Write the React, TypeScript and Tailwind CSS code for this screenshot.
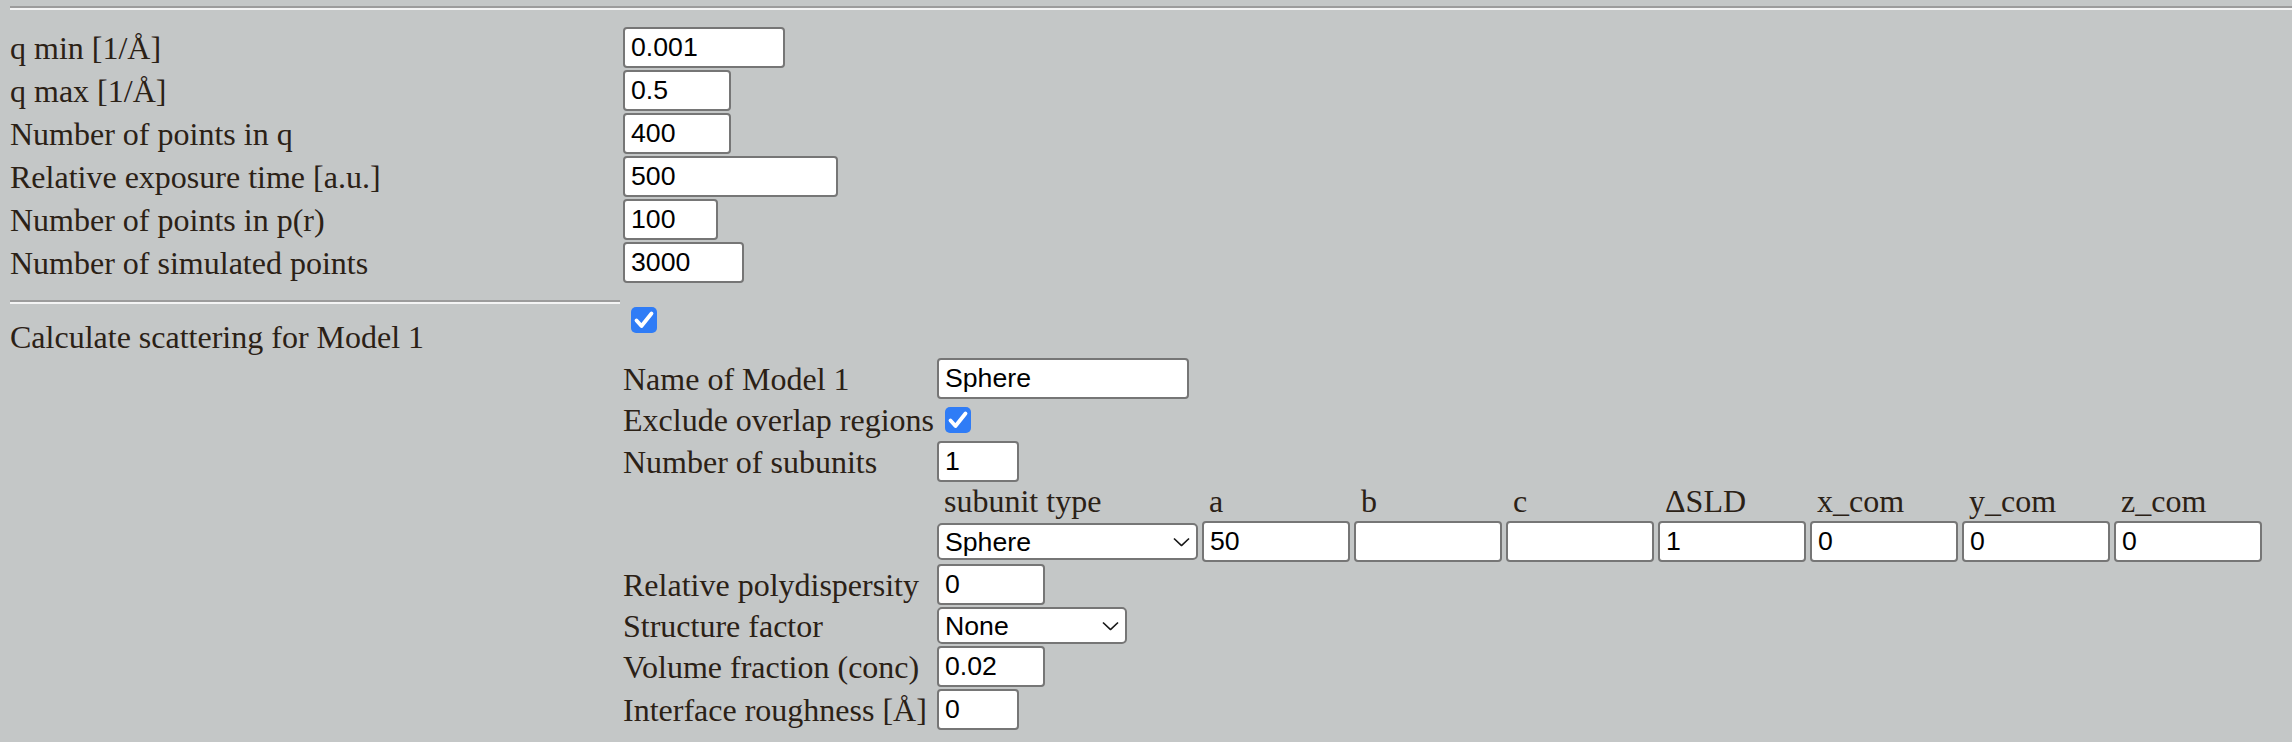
import type { ReactNode } from 'react'

const serif = "font-['Liberation_Serif','Times_New_Roman',serif] text-[32px] text-[#2b2116]"
const sans = "font-['Liberation_Sans',Arial,sans-serif] text-[26.67px] text-black"

function TextBox({ value, width }: { value: string; width: string }) {
  return (
    <input
      type="text"
      defaultValue={value}
      className={`h-[41px] ${width} rounded-[4px] border-2 border-[#767676] bg-white px-[6px] ${sans} outline-none`}
    />
  )
}

function Dropdown({ value, width }: { value: string; width: string }) {
  return (
    <div className={`relative h-[37px] ${width}`}>
      <select
        defaultValue={value}
        className={`h-full w-full appearance-none rounded-[5px] border-2 border-[#767676] bg-white py-0 pl-[6px] leading-[30px] ${sans} outline-none`}
      >
        <option>{value}</option>
      </select>
      <svg
        className="pointer-events-none absolute right-[8px] top-1/2 h-[9px] w-[17px] -translate-y-1/2"
        viewBox="0 0 17 9"
      >
        <title>open</title>
        <path d="M1 1 L8.5 8 L16 1" fill="none" stroke="#1a1a1a" strokeWidth={1.7} />
      </svg>
    </div>
  )
}

function CheckBox({ className = '' }: { className?: string }) {
  return (
    <span
      className={`flex h-[26px] w-[26px] items-center justify-center rounded-[5px] bg-[#2f7cf6] ${className}`}
    >
      <svg viewBox="0 0 26 26" className="h-[26px] w-[26px]">
        <title>checked</title>
        <path
          d="M5.5 13.5 L10.5 19 L20.5 6.5"
          fill="none"
          stroke="white"
          strokeWidth={3.8}
          strokeLinecap="round"
          strokeLinejoin="round"
        />
      </svg>
    </span>
  )
}

function Rule({ className = '' }: { className?: string }) {
  return <div className={`border-t-2 border-b-2 border-t-[#9c9c9c] border-b-[#f4f4f4] ${className}`} />
}

function TopRow({ label, value, width }: { label: string; value: string; width: string }) {
  return (
    <div className="flex h-[41px] items-center gap-[3px]">
      <div className={`w-[610px] ${serif}`}>{label}</div>
      <TextBox value={value} width={width} />
    </div>
  )
}

function ModelRow({ label, height = 'h-[41px]', children }: { label: string; height?: string; children: ReactNode }) {
  return (
    <div className={`flex ${height} items-center gap-[4px]`}>
      <div className={`w-[310px] whitespace-nowrap ${serif}`}>{label}</div>
      {children}
    </div>
  )
}

const columns = ['a', 'b', 'c', 'ΔSLD', 'x_com', 'y_com', 'z_com']
const values = ['50', '', '', '1', '0', '0', '0']

export default function App() {
  return (
    <div className="min-h-screen w-full bg-[#c4c7c7] pl-[10px] pt-[6px]">
      <Rule />
      <div className="mt-[17px] flex flex-col gap-[2px]">
        <TopRow label="q min [1/Å]" value="0.001" width="w-[162px]" />
        <TopRow label="q max [1/Å]" value="0.5" width="w-[108px]" />
        <TopRow label="Number of points in q" value="400" width="w-[108px]" />
        <TopRow label="Relative exposure time [a.u.]" value="500" width="w-[215px]" />
        <TopRow label="Number of points in p(r)" value="100" width="w-[95px]" />
        <TopRow label="Number of simulated points" value="3000" width="w-[121px]" />
      </div>

      <div className="mt-[2px] flex gap-[3px]">
        <div className="w-[610px]">
          <Rule className="mt-[15px]" />
          <div className={`mt-[9px] ${serif}`}>Calculate scattering for Model 1</div>
        </div>

        <div className="flex flex-col">
          <CheckBox className="ml-[8px] mt-[22px]" />
          <div className="mt-[25px] flex flex-col gap-[2px]">
            <ModelRow label="Name of Model 1">
              <TextBox value="Sphere" width="w-[252px]" />
            </ModelRow>
            <ModelRow label="Exclude overlap regions" height="h-[38px]">
              <CheckBox className="ml-[8px] self-start mt-[6px]" />
            </ModelRow>
            <ModelRow label="Number of subunits">
              <TextBox value="1" width="w-[82px]" />
            </ModelRow>
            <div className="ml-[314px] flex h-[35px] items-center gap-[4px]">
              <div className={`w-[261px] pl-[7px] leading-[35px] ${serif}`}>subunit type</div>
              {columns.map((c) => (
                <div key={c} className={`w-[148px] pl-[7px] leading-[35px] ${serif}`}>
                  {c}
                </div>
              ))}
            </div>
            <div className="ml-[314px] flex h-[41px] items-center gap-[4px]">
              <Dropdown value="Sphere" width="w-[261px]" />
              {values.map((v, i) => (
                <TextBox key={columns[i]} value={v} width="w-[148px]" />
              ))}
            </div>
            <ModelRow label="Relative polydispersity">
              <TextBox value="0" width="w-[108px]" />
            </ModelRow>
            <ModelRow label="Structure factor" height="h-[37px]">
              <Dropdown value="None" width="w-[190px]" />
            </ModelRow>
            <ModelRow label="Volume fraction (conc)">
              <TextBox value="0.02" width="w-[108px]" />
            </ModelRow>
            <ModelRow label="Interface roughness [Å]">
              <TextBox value="0" width="w-[82px]" />
            </ModelRow>
          </div>
        </div>
      </div>
    </div>
  )
}
